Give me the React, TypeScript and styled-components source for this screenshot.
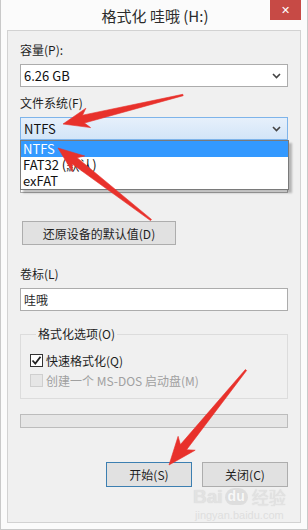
import React from 'react';
import styled, { createGlobalStyle } from 'styled-components';

// 화살표 폴리곤 좌표 계산
type Pt = [number, number];

const arrowPoints = (tail: Pt, tip: Pt, headLen = 26, headW = 20, shaftW = 8, tailW = 1.5) => {
  const dx = tip[0] - tail[0];
  const dy = tip[1] - tail[1];
  const len = Math.hypot(dx, dy);
  const ux = dx / len;
  const uy = dy / len;
  const nx = -uy;
  const ny = ux;
  const bx = tip[0] - ux * headLen;
  const by = tip[1] - uy * headLen;
  const bx2 = tip[0] - ux * (headLen - 5);
  const by2 = tip[1] - uy * (headLen - 5);
  const pts: Pt[] = [
    [tail[0] + (nx * tailW) / 2, tail[1] + (ny * tailW) / 2],
    [bx2 + (nx * shaftW) / 2, by2 + (ny * shaftW) / 2],
    [bx + (nx * headW) / 2, by + (ny * headW) / 2],
    tip,
    [bx - (nx * headW) / 2, by - (ny * headW) / 2],
    [bx2 - (nx * shaftW) / 2, by2 - (ny * shaftW) / 2],
    [tail[0] - (nx * tailW) / 2, tail[1] - (ny * tailW) / 2],
  ];
  return pts.map((p) => `${p[0].toFixed(1)},${p[1].toFixed(1)}`).join(' ');
};

const arrows: { tail: Pt; tip: Pt; len?: number; w?: number }[] = [
  { tail: [182, 95], tip: [62, 124] },
  { tail: [150, 220], tip: [57, 148] },
  { tail: [245, 370], tip: [168, 465], len: 28, w: 22 },
];

const options = ['NTFS', 'FAT32 (默认)', 'exFAT'];

const App = () => {
  return (
    <>
      <GlobalStyle />
      <Window>
        <TitleBar>
          <span />
          <Title>格式化 哇哦 (H:)</Title>
          <CloseButton>✕</CloseButton>
        </TitleBar>

        <Client>
          <Field>
            <Label>容量(P):</Label>
            <Select>
              <span>6.26 GB</span>
              <Chevron />
            </Select>
          </Field>

          <Field>
            <Label>文件系统(F)</Label>
            <Select $open>
              <span>NTFS</span>
              <Chevron />
            </Select>
            <DropList>
              {options.map((o, i) => (
                <DropItem key={o} $active={i === 0}>
                  {o}
                </DropItem>
              ))}
            </DropList>
          </Field>

          <Field>
            <Label>分配单元大小(A)</Label>
            <Select>
              <span>4096 字节</span>
              <Chevron />
            </Select>
          </Field>

          <RestoreButton>还原设备的默认值(D)</RestoreButton>

          <Field $top={21}>
            <Label>卷标(L)</Label>
            <TextInput>哇哦</TextInput>
          </Field>

          <GroupBox>
            <Legend>格式化选项(O)</Legend>
            <CheckRow>
              <CheckBox $checked>
                <svg width='11' height='11' viewBox='0 0 11 11'>
                  <path d='M1.5 5.5 L4.3 8.5 L9.5 1.8' fill='none' stroke='#222' strokeWidth='1.8' />
                </svg>
              </CheckBox>
              快速格式化(Q)
            </CheckRow>
            <CheckRow $disabled>
              <CheckBox />
              创建一个 MS-DOS 启动盘(M)
            </CheckRow>
          </GroupBox>

          <Progress />

          <ButtonRow>
            <DialogButton $focused>开始(S)</DialogButton>
            <DialogButton>关闭(C)</DialogButton>
          </ButtonRow>
        </Client>

        <Watermark>
          <WmLogo>
            Bai<WmPaw>du</WmPaw>
            <WmCn>经验</WmCn>
          </WmLogo>
          <WmUrl>jingyan.baidu.com</WmUrl>
        </Watermark>

        <ArrowLayer width='308' height='530' viewBox='0 0 308 530'>
          {arrows.map((a, i) => (
            <polygon
              key={i}
              points={arrowPoints(a.tail, a.tip, a.len ?? 26, a.w ?? 20)}
              fill='#e8312b'
              stroke='#e8312b'
              strokeWidth='0.6'
              strokeLinejoin='round'
            />
          ))}
        </ArrowLayer>
      </Window>
    </>
  );
};

export default App;

const Chevron = () => (
  <svg width='9' height='6' viewBox='0 0 9 6'>
    <path d='M1 1 L4.5 4.5 L8 1' fill='none' stroke='#444' strokeWidth='1.6' />
  </svg>
);

// Styled components
const GlobalStyle = createGlobalStyle`
  body {
    margin: 0;
    background: #ffffff;
    font-family: 'Noto Sans CJK SC', 'Noto Sans', sans-serif;
    font-size: 12px;
    color: #1e1e1e;
  }
`;

const Window = styled.div`
  position: relative;
  width: 308px;
  height: 530px;
  box-sizing: border-box;
  background: #fbfbfb;
  border: 1px solid #c9c9c9;
  border-top: none;
  display: flex;
  flex-direction: column;
  overflow: hidden;
`;

const TitleBar = styled.div`
  height: 30px;
  display: grid;
  grid-template-columns: 1fr auto 1fr;
  align-items: start;
`;

const Title = styled.div`
  font-size: 15px;
  line-height: 32px;
  color: #2b2b2b;
  padding-left: 2px;
`;

const CloseButton = styled.div`
  justify-self: end;
  margin-right: 6px;
  width: 31px;
  height: 20px;
  background: #c74a45;
  color: #fff;
  font-family: 'DejaVu Sans', sans-serif;
  font-size: 11px;
  font-weight: bold;
  display: flex;
  align-items: center;
  justify-content: center;
`;

const Client = styled.div`
  margin: 0 6px 0 6px;
  height: 493px;
  box-sizing: border-box;
  border: 1px solid #d2d2d2;
  background: #f0f0f0;
  padding: 11px 12px 0 12px;
  display: flex;
  flex-direction: column;
`;

const Field = styled.div<{ $top?: number }>`
  position: relative;
  display: flex;
  flex-direction: column;
  margin-top: ${(p) => p.$top ?? 0}px;
  margin-bottom: 8px;
`;

const Label = styled.div`
  line-height: 16px;
  height: 16px;
  margin-bottom: 6px;
`;

const Select = styled.div<{ $open?: boolean }>`
  height: 23px;
  box-sizing: border-box;
  border: 1px solid ${(p) => (p.$open ? '#7eb4ea' : '#acacac')};
  background: ${(p) => (p.$open ? 'linear-gradient(#e6f0fb, #d3e5f8)' : '#ffffff')};
  display: flex;
  align-items: center;
  justify-content: space-between;
  padding: 0 6px 0 3px;
  font-size: 13px;
  color: #111;
`;

const DropList = styled.div`
  position: absolute;
  top: 45px;
  left: 0;
  width: 269px;
  box-sizing: border-box;
  background: #ffffff;
  border: 1px solid #7a7a7a;
  box-shadow: 3px 3px 2px rgba(0, 0, 0, 0.25);
  z-index: 2;
`;

const DropItem = styled.div<{ $active?: boolean }>`
  height: 16px;
  line-height: 16px;
  padding-left: 2px;
  font-size: 13px;
  background: ${(p) => (p.$active ? '#3399ff' : '#ffffff')};
  color: ${(p) => (p.$active ? '#ffffff' : '#111')};
`;

const RestoreButton = styled.div`
  margin: 20px 0 0 2px;
  width: 154px;
  height: 24px;
  box-sizing: border-box;
  border: 1px solid #adadad;
  background: #e1e1e1;
  display: flex;
  align-items: center;
  justify-content: center;
  font-size: 12px;
`;

const TextInput = styled.div`
  height: 23px;
  box-sizing: border-box;
  border: 1px solid #acacac;
  background: #ffffff;
  padding-left: 3px;
  display: flex;
  align-items: center;
  font-size: 12px;
`;

const GroupBox = styled.fieldset`
  margin: 7px 0 0 0;
  padding: 8px 9px 9px 9px;
  border: 1px solid #dcdcdc;
  height: 73px;
  box-sizing: border-box;
  display: flex;
  flex-direction: column;
`;

const Legend = styled.legend`
  margin-left: 6px;
  padding: 0 2px;
  line-height: 16px;
`;

const CheckRow = styled.div<{ $disabled?: boolean }>`
  display: flex;
  align-items: center;
  height: 20px;
  gap: 3px;
  color: ${(p) => (p.$disabled ? '#a0a0a0' : '#1e1e1e')};
`;

const CheckBox = styled.span<{ $checked?: boolean }>`
  width: 13px;
  height: 13px;
  box-sizing: border-box;
  border: 1px solid ${(p) => (p.$checked ? '#333' : '#cfcfcf')};
  background: ${(p) => (p.$checked ? '#ffffff' : '#e6e6e6')};
  display: flex;
  align-items: center;
  justify-content: center;
`;

const Progress = styled.div`
  margin-top: 15px;
  height: 14px;
  box-sizing: border-box;
  border: 1px solid #bcbcbc;
  background: #e6e6e6;
`;

const ButtonRow = styled.div`
  margin-top: 34px;
  display: flex;
  justify-content: flex-end;
  gap: 10px;
`;

const DialogButton = styled.div<{ $focused?: boolean }>`
  width: 86px;
  height: 25px;
  box-sizing: border-box;
  border: 1px solid ${(p) => (p.$focused ? '#3c7fb1' : '#adadad')};
  background: #e1e1e1;
  display: flex;
  align-items: center;
  justify-content: center;
`;

const Watermark = styled.div`
  position: absolute;
  left: 192px;
  top: 484px;
  display: flex;
  flex-direction: column;
  align-items: center;
  pointer-events: none;
  opacity: 0.55;
`;

const WmLogo = styled.div`
  display: flex;
  align-items: center;
  font-family: 'Liberation Sans', sans-serif;
  font-weight: bold;
  font-size: 19px;
  color: #d8d8d8;
  text-shadow: 0 0 1px #bbb;
`;

const WmPaw = styled.span`
  margin-left: 2px;
  font-size: 14px;
  color: #fff;
  background: #d0d0d0;
  border-radius: 10px 10px 8px 8px;
  padding: 0 3px;
  line-height: 17px;
`;

const WmCn = styled.span`
  margin-left: 4px;
  font-family: 'Noto Sans CJK SC', sans-serif;
  font-size: 17px;
  font-weight: normal;
`;

const WmUrl = styled.div`
  font-family: 'Liberation Sans', sans-serif;
  font-size: 11px;
  color: #d0d0d0;
  line-height: 12px;
`;

const ArrowLayer = styled.svg`
  position: absolute;
  left: 0;
  top: 0;
  pointer-events: none;
  z-index: 5;
`;
